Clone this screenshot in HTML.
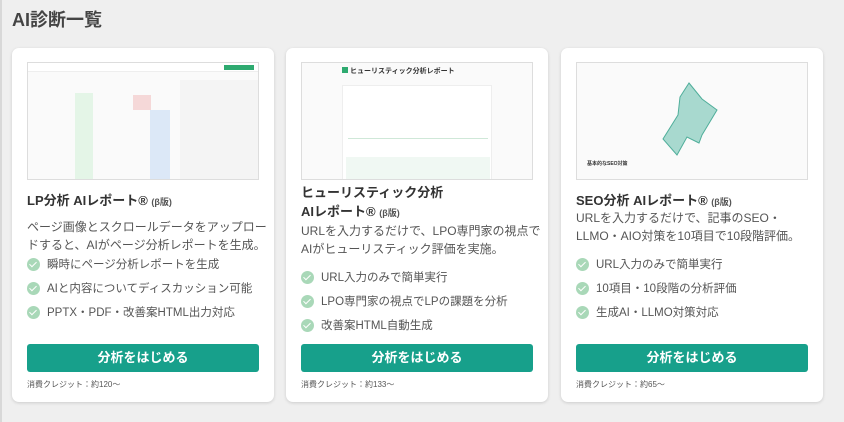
<!DOCTYPE html>
<html><head><meta charset="utf-8"><style>
*{margin:0;padding:0;box-sizing:border-box}
body{width:844px;height:422px;background:#efefef;font-family:"Liberation Sans","Noto Sans CJK JP",sans-serif;position:relative;overflow:hidden}
.edge{position:absolute;left:0;top:0;width:2px;height:422px;background:#d8d8d8}
h1{position:absolute;left:12px;top:6px;font-size:18px;color:#444;font-weight:bold}
.card{position:absolute;top:48px;width:262px;height:354px;background:#fff;border-radius:7px;box-shadow:0 1px 3px rgba(0,0,0,.15)}
.img{position:absolute;left:15px;top:14px;width:232px;height:118px;border:1px solid #ddd;background:#fafafa;overflow:hidden}
.t{position:absolute;left:15px;font-size:13px;font-weight:bold;color:#333;line-height:19px}
.t small{font-size:9px;color:#555}
.d{position:absolute;left:15px;width:240px;font-size:12px;color:#555;line-height:18px}
.f{position:absolute;left:15px;font-size:11.5px;color:#555;display:flex;align-items:center}
.f i{width:13px;height:13px;border-radius:50%;background:#a9d8b8;margin-right:7px;display:inline-block;position:relative}
.f i:after{content:"";position:absolute;left:4px;top:2px;width:3px;height:6px;border:solid #fff;border-width:0 1.5px 1.5px 0;transform:rotate(45deg)}
.b{position:absolute;left:15px;top:296px;width:232px;height:28px;background:#17a08b;border-radius:3px;color:#fff;font-size:13px;font-weight:bold;text-align:center;line-height:28px}
.c{position:absolute;left:15px;top:331px;font-size:8px;color:#555}
</style></head><body>
<div class="edge"></div>
<h1>AI診断一覧</h1>

<div class="card" style="left:12px">
 <div class="img">
  <div style="position:absolute;left:0;top:0;width:100%;height:9px;background:#fff;border-bottom:1px solid #eee"></div>
  <div style="position:absolute;right:4px;top:2px;width:30px;height:5px;background:#2eaa70"></div>
  <div style="position:absolute;left:47px;top:30px;width:18px;height:88px;background:#e4f5e7"></div>
  <div style="position:absolute;left:105px;top:32px;width:18px;height:15px;background:#f5d8d8"></div>
  <div style="position:absolute;left:122px;top:47px;width:20px;height:71px;background:#dce8f7"></div>
  <div style="position:absolute;left:152px;top:17px;width:78px;height:100px;background:#f4f4f4"></div>
 </div>
 <div class="t" style="top:143px">LP分析 AIレポート® <small>(β版)</small></div>
 <div class="d" style="top:170px">ページ画像とスクロールデータをアップロードすると、AIがページ分析レポートを生成。</div>
 <div class="f" style="top:208px"><i></i>瞬時にページ分析レポートを生成</div>
 <div class="f" style="top:232px"><i></i>AIと内容についてディスカッション可能</div>
 <div class="f" style="top:256px"><i></i>PPTX・PDF・改善案HTML出力対応</div>
 <div class="b">分析をはじめる</div>
 <div class="c">消費クレジット：約120〜</div>
</div>

<div class="card" style="left:286px">
 <div class="img">
  <div style="position:absolute;left:40px;top:4px;width:6px;height:6px;background:#2eaa70"></div>
  <div style="position:absolute;left:48px;top:3px;font-size:7px;font-weight:bold;color:#333">ヒューリスティック分析レポート</div>
  <div style="position:absolute;left:40px;top:22px;width:150px;height:96px;background:#fff;border:1px solid #eee"></div>
  <div style="position:absolute;left:46px;top:75px;width:140px;height:1px;background:#cfe8d8"></div>
  <div style="position:absolute;left:44px;top:94px;width:144px;height:24px;background:#f0f8f3"></div>
 </div>
 <div class="t" style="top:135px">ヒューリスティック分析<br>AIレポート® <small>(β版)</small></div>
 <div class="d" style="top:174px">URLを入力するだけで、LPO専門家の視点でAIがヒューリスティック評価を実施。</div>
 <div class="f" style="top:221px"><i></i>URL入力のみで簡単実行</div>
 <div class="f" style="top:245px"><i></i>LPO専門家の視点でLPの課題を分析</div>
 <div class="f" style="top:269px"><i></i>改善案HTML自動生成</div>
 <div class="b">分析をはじめる</div>
 <div class="c">消費クレジット：約133〜</div>
</div>

<div class="card" style="left:561px">
 <div class="img">
  <svg width="232" height="118" style="position:absolute;left:0;top:0"><polygon points="112,20 125,36 140,47 125,72 122,80 110,74 100,92 86,76 101,52 103,34" fill="#a8d9cf" stroke="#4fae9a" stroke-width="1"/></svg>
  <div style="position:absolute;left:10px;top:97px;font-size:5px;font-weight:bold;color:#333">基本的なSEO対策</div>
 </div>
 <div class="t" style="top:143px">SEO分析 AIレポート® <small>(β版)</small></div>
 <div class="d" style="top:161px">URLを入力するだけで、記事のSEO・LLMO・AIO対策を10項目で10段階評価。</div>
 <div class="f" style="top:208px"><i></i>URL入力のみで簡単実行</div>
 <div class="f" style="top:232px"><i></i>10項目・10段階の分析評価</div>
 <div class="f" style="top:256px"><i></i>生成AI・LLMO対策対応</div>
 <div class="b">分析をはじめる</div>
 <div class="c">消費クレジット：約65〜</div>
</div>
</body></html>
